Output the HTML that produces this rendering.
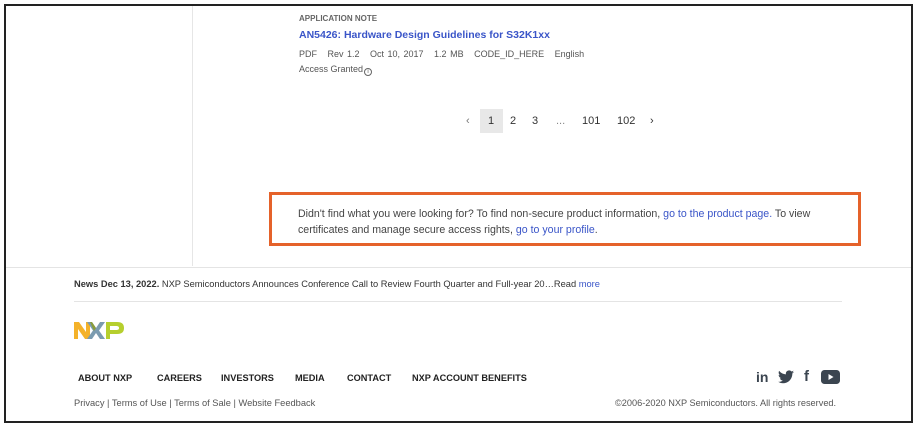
<!DOCTYPE html>
<html><head><style>
*{margin:0;padding:0;box-sizing:border-box}
body{width:918px;height:429px;background:#fff;font-family:"Liberation Sans",sans-serif;position:relative;overflow:hidden;color:#333}
.a{position:absolute;white-space:nowrap}
.frame{position:absolute;left:4px;top:4px;width:909px;height:419px;border:2px solid #222}
.blue{color:#3a55c8}
.nav span{position:absolute;font-size:9.2px;font-weight:bold;color:#222}
</style></head><body>
<div class="frame"></div>
<div class="a" style="left:192px;top:6px;width:1px;height:260px;background:#e6e6e6"></div>
<div class="a" style="left:6px;top:267px;width:905px;height:1px;background:#e4e4e4"></div>
<div class="a" style="left:299px;top:14px;font-size:8px;font-weight:bold;color:#666">APPLICATION NOTE</div>
<div class="a blue" style="left:299px;top:29px;font-size:10.5px;font-weight:bold">AN5426: Hardware Design Guidelines for S32K1xx</div>
<div class="a" style="left:299px;top:49px;font-size:9px;color:#555;word-spacing:1px">PDF&nbsp;&nbsp; Rev 1.2&nbsp;&nbsp; Oct 10, 2017&nbsp;&nbsp; 1.2 MB&nbsp;&nbsp; CODE_ID_HERE&nbsp;&nbsp; English</div>
<div class="a" style="left:299px;top:64px;font-size:9px;color:#555">Access Granted<span style="display:inline-block;width:8px;height:8px;border:1px solid #666;border-radius:50%;font-size:6px;line-height:6px;text-align:center;vertical-align:-1px;margin-left:1px">i</span></div>
<div class="a" style="left:480px;top:109px;width:23px;height:24px;background:#e8e8e8"></div>
<div class="a" style="top:115px;font-size:11px;color:#333;left:0;width:918px">
<span class="a" style="left:466px;color:#777">‹</span><span class="a" style="left:488px">1</span><span class="a" style="left:510px">2</span><span class="a" style="left:532px">3</span><span class="a" style="left:556px;color:#888">...</span><span class="a" style="left:582px">101</span><span class="a" style="left:617px">102</span><span class="a" style="left:650px">›</span></div>
<div class="a" style="left:269px;top:192px;width:592px;height:54px;border:3px solid #e5622a"></div>
<div class="a" style="left:298px;top:206px;font-size:10.6px;color:#444;line-height:16px">Didn't find what you were looking for? To find non-secure product information, <span class="blue">go to the product page.</span> To view<br>certificates and manage secure access rights, <span class="blue">go to your profile</span>.</div>
<div class="a" style="left:74px;top:279px;font-size:9.3px;color:#333"><b>News Dec 13, 2022.</b> NXP Semiconductors Announces Conference Call to Review Fourth Quarter and Full-year 20…Read <span class="blue">more</span></div>
<div class="a" style="left:74px;top:301px;width:768px;height:1px;background:#e4e4e4"></div>
<svg class="a" style="left:74px;top:320px" width="54" height="21" viewBox="0 0 54 21">
<path d="M0 2h5l7 10V2h4v17h-5L4 9v10H0z" fill="#f4b22a"/>
<path d="M13 2h5l4 6 4-6h5l-6 8.5 6 8.5h-5l-4-6-4 6h-5l6-8.5z" fill="#7b9bb0"/>
<path d="M16 2h2l4 6-2 3z" fill="#8a9c3a"/>
<path d="M32 2h11c5 0 7 2 7 6s-2 6-7 6h-7v5h-4zM36 6v4h6c2 0 3-.5 3-2s-1-2-3-2z" fill="#b6cf2e"/>
</svg>
<div class="nav">
<span style="left:78px;top:373px">ABOUT NXP</span>
<span style="left:157px;top:373px">CAREERS</span>
<span style="left:221px;top:373px">INVESTORS</span>
<span style="left:295px;top:373px">MEDIA</span>
<span style="left:347px;top:373px">CONTACT</span>
<span style="left:412px;top:373px">NXP ACCOUNT BENEFITS</span>
</div>
<div class="a" style="left:74px;top:398px;font-size:9.3px;color:#555">Privacy | Terms of Use | Terms of Sale | Website Feedback</div>
<div class="a" style="left:615px;top:398px;font-size:9.2px;color:#555">©2006-2020 NXP Semiconductors. All rights reserved.</div>
<div class="a" style="left:756px;top:369px;font-size:14px;font-weight:bold;color:#3b4550">in</div>
<svg class="a" style="left:778px;top:370px" width="16" height="14" viewBox="0 0 24 20"><path d="M24 2.4c-.9.4-1.8.7-2.8.8 1-.6 1.8-1.6 2.2-2.7-1 .6-2 1-3.1 1.2A4.9 4.9 0 0 0 11.900 6 14 14 0 0 1 1.7.9a4.9 4.9 0 0 0 1.5 6.6c-.8 0-1.600-.3-2.2-.6 0 2.4 1.7 4.4 3.9 4.8-.7.2-1.5.2-2.2.1.6 2 2.4 3.4 4.6 3.4A9.9 9.9 0 0 1 0 17.2 14 14 0 0 0 7.5 19.4c9.1 0 14-7.5 14-14v-.6c1-.7 1.8-1.6 2.5-2.4z" fill="#3b4550"/></svg>
<div class="a" style="left:804px;top:368px;font-size:15px;font-weight:bold;color:#3b4550">f</div>
<svg class="a" style="left:821px;top:370px" width="19" height="14" viewBox="0 0 19 14"><rect width="19" height="14" rx="3.5" fill="#3b4550"/><path d="M7.5 4v6l5-3z" fill="#fff"/></svg>
</body></html>
